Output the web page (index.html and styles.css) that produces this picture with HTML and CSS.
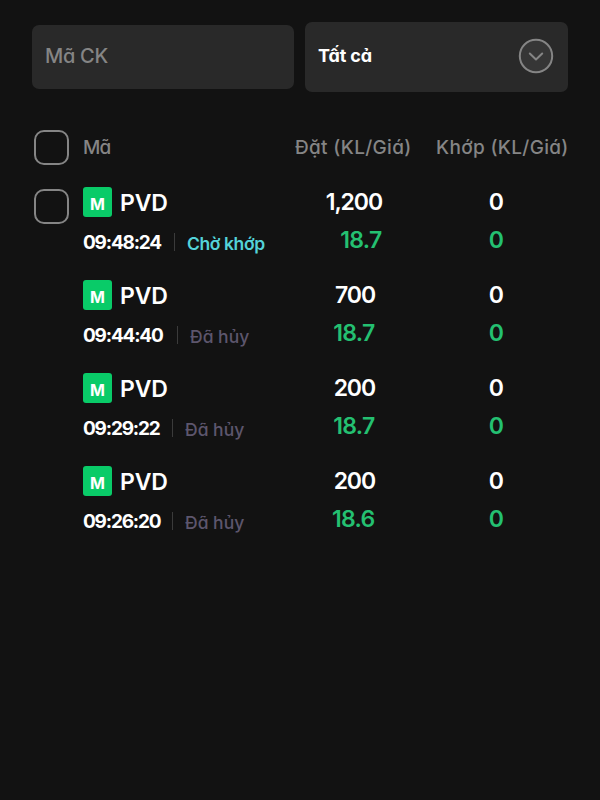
FILE: index.html
```
<!DOCTYPE html>
<html lang="vi">
<head>
<meta charset="utf-8">
<title>Sổ lệnh</title>
<link rel="stylesheet" href="styles.css">
</head>
<body>
<div class="filters">
  <div class="field"><span class="placeholder">Mã CK</span></div>
  <div class="select"><span class="selected">Tất cả</span>
    <svg class="chevron" viewBox="0 0 36 36"><circle cx="18" cy="18" r="16.2"/><path d="M11.8 15.5 18 21.5 24.2 15.5"/></svg>
  </div>
</div>
<div class="head">
  <span class="check"></span>
  <span class="h-code">Mã</span>
  <span class="h-order">Đặt (KL/Giá)</span>
  <span class="h-match">Khớp (KL/Giá)</span>
</div>
<div class="orders">
  <div class="row first">
    <span class="check"></span>
    <div class="info"><div class="stock"><span class="badge">M</span><span class="symbol">PVD</span></div>
      <div class="meta"><span class="time">09:48:24</span><i class="bar"></i><span class="status pending">Chờ khớp</span></div></div>
    <div class="order"><span class="volume">1,200</span><span class="price">18.7</span></div>
    <div class="match"><span class="volume">0</span><span class="price">0</span></div>
  </div>
  <div class="row">
    <span></span>
    <div class="info"><div class="stock"><span class="badge">M</span><span class="symbol">PVD</span></div>
      <div class="meta"><span class="time t2">09:44:40</span><i class="bar"></i><span class="status">Đã hủy</span></div></div>
    <div class="order"><span class="volume">700</span><span class="price">18.7</span></div>
    <div class="match"><span class="volume">0</span><span class="price">0</span></div>
  </div>
  <div class="row">
    <span></span>
    <div class="info"><div class="stock"><span class="badge">M</span><span class="symbol">PVD</span></div>
      <div class="meta"><span class="time t3">09:29:22</span><i class="bar"></i><span class="status">Đã hủy</span></div></div>
    <div class="order"><span class="volume">200</span><span class="price">18.7</span></div>
    <div class="match"><span class="volume">0</span><span class="price">0</span></div>
  </div>
  <div class="row">
    <span></span>
    <div class="info"><div class="stock"><span class="badge">M</span><span class="symbol">PVD</span></div>
      <div class="meta"><span class="time t4">09:26:20</span><i class="bar"></i><span class="status">Đã hủy</span></div></div>
    <div class="order"><span class="volume">200</span><span class="price">18.6</span></div>
    <div class="match"><span class="volume">0</span><span class="price">0</span></div>
  </div>
</div>
</body>
</html>
```
FILE: styles.css
```
* { box-sizing: border-box; }
body { margin: 0; width: 600px; height: 800px; overflow: hidden; background: #121212; color: #fff; font-family: Inter, "Open Sans", sans-serif; font-feature-settings: "cv11" 1; white-space: nowrap; }
.filters { display: flex; align-items: center; gap: 11px; padding: 22px 32px 0; height: 92px; }
.field, .select { display: flex; align-items: center; flex: 1; background: #292929; border-radius: 7px; }
.field { height: 64px; padding: 0 13px 2px; }
.select { height: 70px; padding: 0 14px 3px 13px; justify-content: space-between; }
.placeholder { color: #858585; font-size: 20px; font-weight: 500; letter-spacing: -.3px; }
.selected { font-size: 18px; font-weight: 700; letter-spacing: -.2px; }
.chevron { width: 36px; height: 36px; fill: #363636; stroke: #858585; stroke-width: 2; }
.chevron path { fill: none; stroke-linecap: round; stroke-linejoin: round; }
.head, .row { display: grid; align-items: center; }
.head { grid-template-columns: 49px 212px 141px 150px; margin: 37px 0 0 34px; height: 36px; color: #858585; font-size: 19px; font-weight: 500; letter-spacing: .33px; }
.h-code { letter-spacing: -.8px; }
.check { width: 35px; height: 35px; border: 2px solid #858585; border-radius: 10px; }
.orders { padding: 22px 0 0 34px; }
.row { grid-template-columns: 49px 212px 80px 129px; height: 93px; align-items: start; }
.row.first { grid-template-columns: 49px 212px 87px 122px; }
.row .check { margin-top: 2px; }
.stock { display: flex; align-items: center; gap: 8px; height: 30px; }
.badge { display: grid; place-items: center; width: 29px; height: 30px; padding-top: 3px; background: #09cb68; border-radius: 3px; font-size: 16px; font-weight: 700; line-height: 1; }
.symbol { font-size: 23px; font-weight: 600; letter-spacing: -.2px; padding-top: 1px; }
.meta { display: flex; align-items: center; height: 24px; margin-top: 13px; }
.time { width: 79px; padding-top: 1px; font-size: 19px; font-weight: 700; letter-spacing: -1.2px; }
.t2 { width: 82px; }
.t3, .t4 { width: 77px; }
.bar { width: 1px; height: 18px; margin: 0 12px; background: #3b3b3b; }
.status { padding-top: 2px; font-size: 17.5px; font-weight: 500; color: #5d566d; }
.pending { color: #54d3d9; font-weight: 600; letter-spacing: -.4px; }
.order, .match { display: flex; flex-direction: column; align-items: flex-end; font-size: 23px; font-weight: 600; line-height: 30px; }
.order .volume { letter-spacing: -1.1px; }
.order .price { letter-spacing: -.7px; margin-right: .5px; }
.price { margin-top: 8px; color: #24c071; }
```
